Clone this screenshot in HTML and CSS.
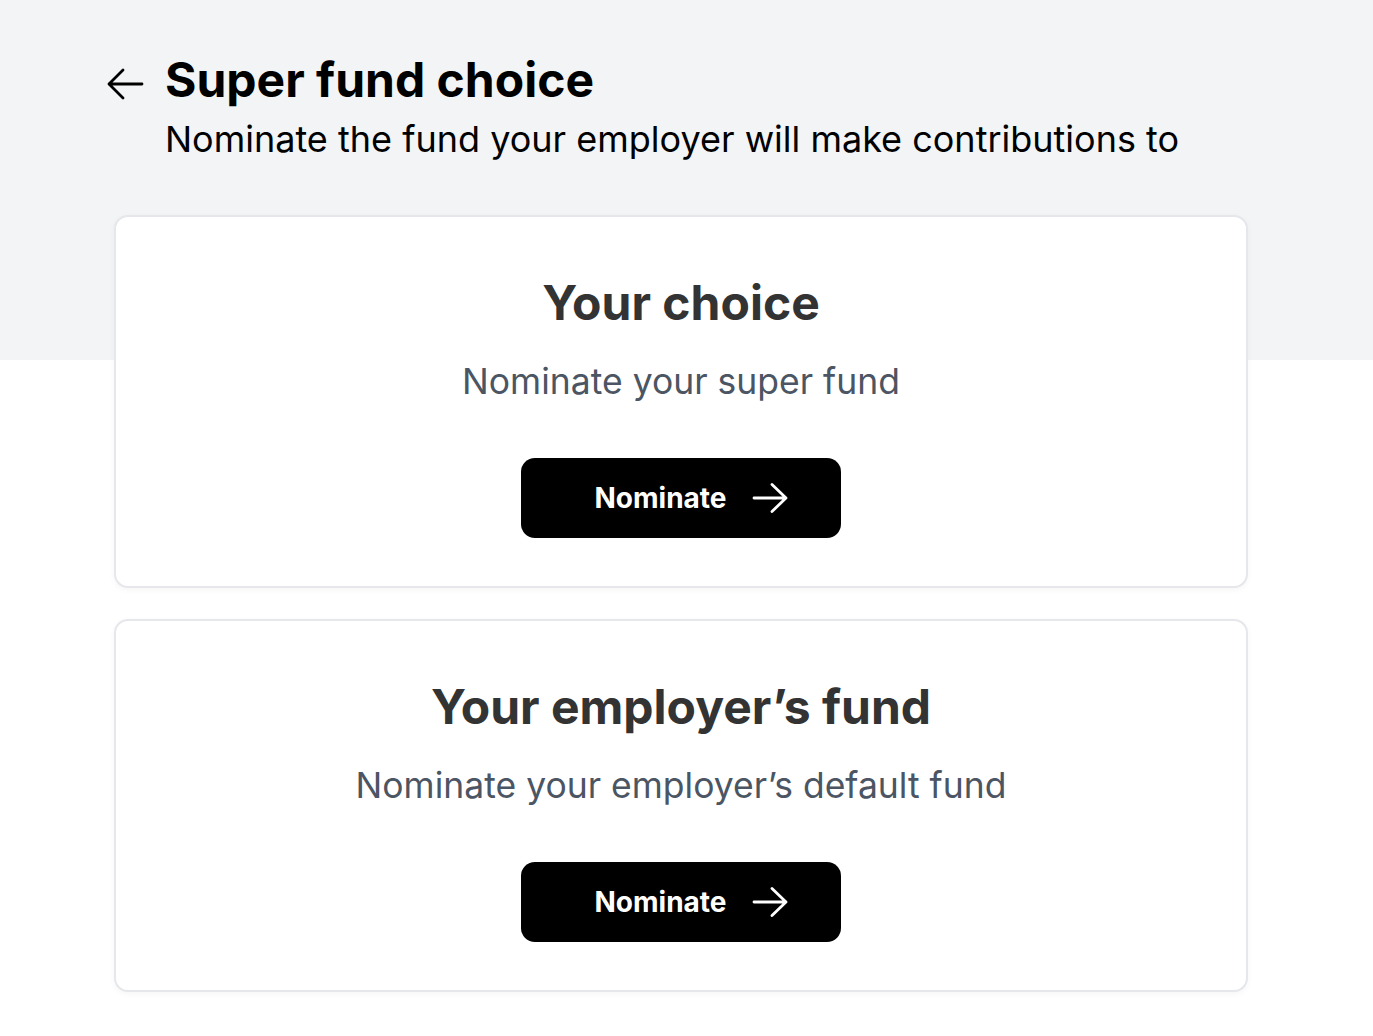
FILE: index.html
```html
<!DOCTYPE html>
<html lang="en">
<head>
<meta charset="utf-8">
<title>Super fund choice</title>
<link rel="stylesheet" href="styles.css">
</head>
<body>
<div class="page">
  <header class="header">
    <a class="back" href="#" aria-label="Back">
      <svg width="38" height="34" viewBox="0 0 38 34" fill="none" stroke="#000" stroke-width="2.8" stroke-linecap="round" stroke-linejoin="round"><path d="M36 17H3M17 3 3 17l14 14"/></svg>
    </a>
    <div class="titles">
      <h1 class="title">Super fund choice</h1>
      <p class="subtitle">Nominate the fund your employer will make contributions to</p>
    </div>
  </header>
  <main class="cards">
    <section class="card">
      <h2 class="card-title">Your choice</h2>
      <p class="card-text">Nominate your super fund</p>
      <button class="btn">Nominate
        <svg width="36" height="30" viewBox="0 0 36 30" fill="none" stroke="#fff" stroke-width="2.8" stroke-linecap="round" stroke-linejoin="round"><path d="M2 15h32M20 1.5 34 15 20 28.5"/></svg>
      </button>
    </section>
    <section class="card">
      <h2 class="card-title">Your employer’s fund</h2>
      <p class="card-text">Nominate your employer’s default fund</p>
      <button class="btn">Nominate
        <svg width="36" height="30" viewBox="0 0 36 30" fill="none" stroke="#fff" stroke-width="2.8" stroke-linecap="round" stroke-linejoin="round"><path d="M2 15h32M20 1.5 34 15 20 28.5"/></svg>
      </button>
    </section>
  </main>
</div>
</body>
</html>
```
FILE: styles.css
```css
* { box-sizing: border-box; }
html, body { margin: 0; padding: 0; }
body {
  font-family: Inter, "Liberation Sans", sans-serif;
  background: linear-gradient(#f3f4f6 0, #f3f4f6 360px, #fff 360px);
  min-height: 1036px;
  color: #000;
}
.page { padding: 52px 0 0 0; }
.header {
  display: flex;
  align-items: flex-start;
  padding-left: 106px;
  gap: 21px;
}
.back { display: flex; margin-top: 15px; }
.titles { display: flex; flex-direction: column; }
.title {
  margin: 0;
  font-size: 48px;
  line-height: 56px;
  font-weight: 700;
}
.subtitle {
  margin: 3px 0 0 0;
  font-size: 36px;
  line-height: 56px;
  font-weight: 400;
}
.cards {
  margin: 48px 125px 0 114px;
  display: flex;
  flex-direction: column;
  gap: 31px;
}
.card {
  background: #fff;
  border: 2px solid #e5e7eb;
  border-radius: 14px;
  box-shadow: 0 2px 6px rgba(0,0,0,0.04);
  height: 373px;
  display: flex;
  flex-direction: column;
  align-items: center;
  padding-top: 56px;
}
.card-title {
  margin: 0;
  font-size: 48px;
  line-height: 60px;
  font-weight: 700;
  color: #333;
}
.card-text {
  margin: 27px 0 0 0;
  font-size: 35.5px;
  line-height: 44px;
  color: #4b5563;
}
.btn {
  margin-top: 54px;
  width: 320px;
  height: 80px;
  border: 0;
  border-radius: 14px;
  background: #000;
  color: #fff;
  font-family: inherit;
  font-size: 28px;
  font-weight: 700;
  display: flex;
  align-items: center;
  justify-content: center;
  gap: 25px;
  padding-left: 26px;
}
```
